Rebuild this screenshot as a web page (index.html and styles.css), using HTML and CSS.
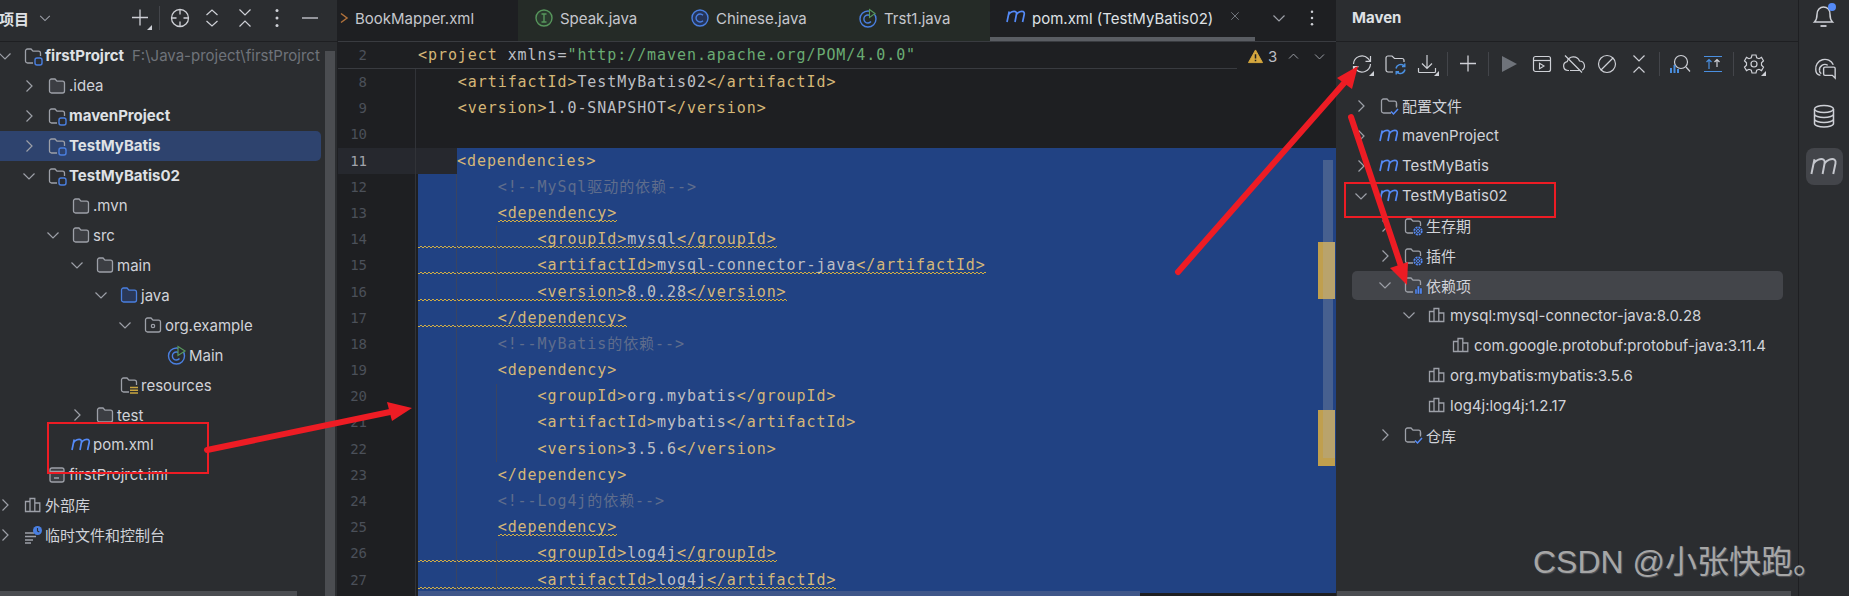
FILE: index.html
```html
<!DOCTYPE html>
<html lang="zh">
<head>
<meta charset="utf-8">
<title>Maven</title>
<link rel="stylesheet" href="styles.css">
</head>
<body>
<svg class="defs" width="0" height="0" aria-hidden="true">
  <defs>
    <symbol id="chev-r" viewBox="0 0 16 16"><path d="M5.5 2.5 11 8l-5.500 5.500" fill="none" stroke="#9da0a8" stroke-width="1.2"/></symbol>
    <symbol id="chev-d" viewBox="0 0 16 16"><path d="M2.500 5.500 8 11l5.500-5.500" fill="none" stroke="#9da0a8" stroke-width="1.2"/></symbol>
    <symbol id="folder" viewBox="0 0 20 20"><path d="M2.500 5a2 2 0 0 1 2-2h3.500l2 2.200h5.500a2 2 0 0 1 2 2V15a2 2 0 0 1-2 2h-11a2 2 0 0 1-2-2z" fill="#3c3e43" stroke="#9da0a8" stroke-width="1.3"/></symbol>
    <symbol id="folder-open" viewBox="0 0 20 20"><path d="M10 17H4.500a2 2 0 0 1-2-2V5a2 2 0 0 1 2-2h3.500l2 2.200h5.500a2 2 0 0 1 2 2V10" fill="none" stroke="#9da0a8" stroke-width="1.300"/></symbol>
    <symbol id="module" viewBox="0 0 20 20"><use href="#folder-open"/><rect x="12" y="12" width="7" height="7" rx="2" fill="none" stroke="#4a7fe0" stroke-width="1.400"/></symbol>
    <symbol id="folder-src" viewBox="0 0 20 20"><path d="M2.500 5a2 2 0 0 1 2-2h3.500l2 2.200h5.500a2 2 0 0 1 2 2V15a2 2 0 0 1-2 2h-11a2 2 0 0 1-2-2z" fill="#2a3857" stroke="#4a7fe0" stroke-width="1.300"/></symbol>
    <symbol id="folder-pkg" viewBox="0 0 20 20"><use href="#folder-open"/><path d="M10 17h5.500a2 2 0 0 0 2-2v-5" fill="none" stroke="#9da0a8" stroke-width="1.300"/><circle cx="10" cy="11" r="1.700" fill="none" stroke="#9da0a8" stroke-width="1.200"/></symbol>
    <symbol id="folder-res" viewBox="0 0 20 20"><use href="#folder-open"/><path d="M11 12.500h8M11 15.200h8M11 18h8" stroke="#c9a53f" stroke-width="1.500"/></symbol>
    <symbol id="main" viewBox="0 0 20 20"><circle cx="9.500" cy="11" r="8" fill="none" stroke="#4a7fe0" stroke-width="1.400"/><path d="M12.500 8.500a4 4 0 1 0 0 5" fill="none" stroke="#4a7fe0" stroke-width="1.400"/><path d="M11 1.500 18 6l-7 4.500z" fill="#2b2d30" stroke="#57965c" stroke-width="1.200"/></symbol>
    <symbol id="mvn" viewBox="0 0 20 20"><path d="M1 15 3.200 4.500M2.600 7.500C4 5 8 3.500 9.800 4.800c.9.700.8 1.700.6 2.700L9 15M10.400 7.500c1.400-2.500 5.400-4 7.200-2.700.9.700.8 1.700.6 2.700L16.600 15" fill="none" stroke="#548af7" stroke-width="1.700"/></symbol>
    <symbol id="mvn-w" viewBox="0 0 20 20"><path d="M1 15 3.200 4.500M2.600 7.500C4 5 8 3.500 9.800 4.800c.9.700.8 1.700.6 2.700L9 15M10.400 7.500c1.400-2.500 5.400-4 7.200-2.700.9.700.8 1.700.6 2.700L16.600 15" fill="none" stroke="#c5c7cd" stroke-width="1.400"/></symbol>
    <symbol id="iml" viewBox="0 0 20 20"><rect x="3" y="3" width="14" height="14" rx="2" fill="#3c3e43" stroke="#9da0a8" stroke-width="1.300"/><path d="M3 6.500h14M7 13h5" stroke="#9da0a8" stroke-width="1.300"/></symbol>
    <symbol id="lib" viewBox="0 0 20 20"><path d="M2.500 16.500V6.500h4.500v10zM7 16.500V3.500h4.800v13zM11.800 16.500V8h5v8.500z" fill="none" stroke="#9da0a8" stroke-width="1.300"/></symbol>
    <symbol id="scratch" viewBox="0 0 20 20"><path d="M2 8h9M2 11.500h11M2 15h8M2 18h6" stroke="#9da0a8" stroke-width="1.300"/><circle cx="14.500" cy="5.500" r="4.500" fill="#4a7fe0"/><path d="M14.500 3v3l1.800 1" fill="none" stroke="#2b2d30" stroke-width="1.100"/></symbol>
    <symbol id="f-check" viewBox="0 0 20 20"><use href="#folder-open"/><path d="M10 17h2M17.500 7.500v4" stroke="#9da0a8" stroke-width="1.300"/><path d="m12 15.500 2.500 2.500 4.500-5" fill="none" stroke="#548af7" stroke-width="1.500"/></symbol>
    <symbol id="f-gear" viewBox="0 0 20 20"><use href="#folder-open"/><circle cx="15" cy="15" r="3.700" fill="none" stroke="#548af7" stroke-width="1.800" stroke-dasharray="2 .9"/><circle cx="15" cy="15" r="1.500" fill="none" stroke="#548af7" stroke-width="1"/></symbol>
    <symbol id="f-dep" viewBox="0 0 20 20"><use href="#folder-open"/><path d="M12 19v-5h2.200v5zM14.200 19v-8h2.400v8zM16.600 19v-6h2.400v6z" fill="#548af7" stroke="#2b2d30" stroke-width=".4"/></symbol>
    <symbol id="i-tab" viewBox="0 0 20 20"><circle cx="10" cy="10" r="8" fill="#2a3a2e" stroke="#57965c" stroke-width="1.400"/><path d="M7.500 6h5M7.500 14h5M10 6v8" stroke="#57965c" stroke-width="1.400"/></symbol>
    <symbol id="c-tab" viewBox="0 0 20 20"><circle cx="10" cy="10" r="8" fill="#253457" stroke="#4a7fe0" stroke-width="1.400"/><path d="M13 7.300a4 4 0 1 0 0 5.400" fill="none" stroke="#4a7fe0" stroke-width="1.400"/></symbol>
    <symbol id="t-tab" viewBox="0 0 20 20"><circle cx="10" cy="11" r="8" fill="none" stroke="#4a7fe0" stroke-width="1.400"/><path d="M13 8.500a4 4 0 1 0 0 5" fill="none" stroke="#4a7fe0" stroke-width="1.400"/><path d="M11.500 1.500 17 5.500l-5.500 4z" fill="#252b27" stroke="#57965c" stroke-width="1.100"/></symbol>
    <symbol id="xml-tab" viewBox="0 0 10 20"><path d="M1 5.500 7 10l-6 4.500" fill="none" stroke="#b0713b" stroke-width="1.500"/></symbol>
    <symbol id="close" viewBox="0 0 12 12"><path d="m1.500 1.500 9 9M10.500 1.500l-9 9" stroke="#6f737a" stroke-width="1.200"/></symbol>
    <symbol id="corner" viewBox="0 0 24 24"><path d="M24 19v5h-5z" fill="#ced0d6"/></symbol>
    <symbol id="t-plus" viewBox="0 0 24 24"><path d="M12 3.500v16M4 11.500h16" stroke="#ced0d6" stroke-width="1.300"/></symbol>
    <symbol id="t-target" viewBox="0 0 24 24"><circle cx="12" cy="12" r="8.500" fill="none" stroke="#ced0d6" stroke-width="1.300"/><path d="M12 3.500v5M12 15.500v5M3.500 12h5M15.500 12h5" stroke="#ced0d6" stroke-width="1.300"/></symbol>
    <symbol id="t-expand" viewBox="0 0 24 24"><path d="m6.500 9 5.500-5 5.500 5M6.500 15l5.500 5 5.500-5" fill="none" stroke="#ced0d6" stroke-width="1.200"/></symbol>
    <symbol id="t-collapse" viewBox="0 0 24 24"><path d="m6.500 3.500 5.500 5.500 5.500-5.500M6.500 20.500l5.500-5.500 5.500 5.500" fill="none" stroke="#ced0d6" stroke-width="1.200"/></symbol>
    <symbol id="t-dots" viewBox="0 0 24 24"><circle cx="12" cy="4.500" r="1.500" fill="#ced0d6"/><circle cx="12" cy="12" r="1.500" fill="#ced0d6"/><circle cx="12" cy="19.500" r="1.500" fill="#ced0d6"/></symbol>
    <symbol id="t-min" viewBox="0 0 24 24"><path d="M4 12h16" stroke="#ced0d6" stroke-width="1.300"/></symbol>
    <symbol id="t-refresh" viewBox="0 0 24 24"><path d="M3.500 12A8.500 8.500 0 0 1 18 6.500l2 2.500M20.500 12A8.500 8.500 0 0 1 6 17.500L4 15" fill="none" stroke="#ced0d6" stroke-width="1.200"/><path d="M20.500 4v5.300h-5M3.500 20v-5.300h5" fill="none" stroke="#ced0d6" stroke-width="1.200"/></symbol>
    <symbol id="t-fsync" viewBox="0 0 24 24"><path d="M10 20H5a2 2 0 0 1-2-2V6a2 2 0 0 1 2-2h4l2.500 2.500H19a2 2 0 0 1 2 2V10" fill="none" stroke="#ced0d6" stroke-width="1.200"/><path d="M13 16.500a5 5 0 0 1 8.500-2.500M22 17.500a5 5 0 0 1-8.500 2.500M21.800 11.500V14.500H19M13.200 22.500V19.800H16" fill="none" stroke="#4a8fe0" stroke-width="1.400"/></symbol>
    <symbol id="t-down" viewBox="0 0 24 24"><path d="M12 3v13M7 11.500l5 5 5-5M3.500 16v3.500a1 1 0 0 0 1 1h15a1 1 0 0 0 1-1V16" fill="none" stroke="#ced0d6" stroke-width="1.200"/></symbol>
    <symbol id="t-run" viewBox="0 0 24 24"><path d="M5 4v16l15-8z" fill="#6f737a"/></symbol>
    <symbol id="t-conf" viewBox="0 0 24 24"><rect x="3.500" y="4.500" width="17" height="15" rx="2" fill="none" stroke="#ced0d6" stroke-width="1.200"/><path d="M3.500 8.500h17" stroke="#ced0d6" stroke-width="1.200"/><path d="m9.500 11.200 4.500 2.800-4.500 2.800z" fill="none" stroke="#ced0d6" stroke-width="1.100"/></symbol>
    <symbol id="t-cloud" viewBox="0 0 24 24"><path d="M7 18.500H6a4.500 4.500 0 0 1-.8-8.900 6.500 6.500 0 0 1 12.300-.6 5 5 0 0 1 2.500 9.300" fill="none" stroke="#ced0d6" stroke-width="1.200"/><path d="M8 18.500h10M3 3.500l17 17" fill="none" stroke="#ced0d6" stroke-width="1.200"/></symbol>
    <symbol id="t-ban" viewBox="0 0 24 24"><circle cx="12" cy="12" r="8.500" fill="none" stroke="#ced0d6" stroke-width="1.200"/><path d="M6 18 18 6" stroke="#ced0d6" stroke-width="1.200"/></symbol>
    <symbol id="t-search" viewBox="0 0 24 24"><circle cx="13" cy="10" r="6.500" fill="none" stroke="#ced0d6" stroke-width="1.200"/><path d="m18 15 4 4.500" stroke="#ced0d6" stroke-width="1.200"/><path d="M3 16v5M6.500 13v8M10 17v4" stroke="#4a8fe0" stroke-width="2"/></symbol>
    <symbol id="t-up" viewBox="0 0 24 24"><path d="M3 4.500h18M3 19.500h18" stroke="#4a8fe0" stroke-width="1.200"/><path d="M8 17V7.500M5.500 10l2.500-2.500 2.500 2.500" fill="none" stroke="#4a8fe0" stroke-width="1.200"/><path d="M16 15V7.500M13.500 10l2.500-2.500 2.500 2.500" fill="none" stroke="#ced0d6" stroke-width="1.200"/></symbol>
    <symbol id="t-gear" viewBox="0 0 24 24"><path d="M10 3h4l.7 2.700 2.300 1 2.500-1.300 2 3.400-2 1.900v2.600l2 1.900-2 3.400-2.500-1.300-2.300 1L14 21h-4l-.7-2.700-2.300-1-2.500 1.300-2-3.400 2-1.900v-2.600l-2-1.900 2-3.400L7 6.700l2.300-1z" fill="none" stroke="#ced0d6" stroke-width="1.200"/><circle cx="12" cy="12" r="3" fill="none" stroke="#ced0d6" stroke-width="1.200"/></symbol>
    <symbol id="s-bell" viewBox="0 0 26 28"><path d="M2.500 20c2-2 2.500-4 2.500-7.500C5 8 8 5 11.500 5S18 7.500 18 12.500c0 3.500.5 5.500 2.500 7.500z" fill="none" stroke="#ced0d6" stroke-width="1.500"/><path d="M8.500 24h6" stroke="#ced0d6" stroke-width="1.800"/><circle cx="20" cy="5" r="4" fill="#548af7"/></symbol>
    <symbol id="s-ai" viewBox="0 0 26 26"><path d="M3 15A10 10 0 0 1 22 9.500" fill="none" stroke="#ced0d6" stroke-width="1.500"/><path d="M7 16a6 6 0 0 1 9-6" fill="none" stroke="#ced0d6" stroke-width="1.500"/><path d="M3 15c0 3 2 5.500 5 6M7 16c0 1.500 1 2.500 2 3" fill="none" stroke="#ced0d6" stroke-width="1.500"/><path d="M13 12h9.500a1.500 1.500 0 0 1 1.500 1.500V24l-3-3h-8a1.500 1.500 0 0 1-1.500-1.500v-6A1.500 1.500 0 0 1 13 12z" fill="#2b2d30" stroke="#ced0d6" stroke-width="1.500"/></symbol>
    <symbol id="s-db" viewBox="0 0 24 24"><ellipse cx="12" cy="5" ry="3.500" rx="9.500" fill="none" stroke="#ced0d6" stroke-width="1.500"/><path d="M2.500 5v14.500C2.500 21.500 7 23 12 23s9.500-1.500 9.500-3.500V5M2.500 10c0 2 4.500 3.500 9.500 3.500s9.500-1.500 9.500-3.500M2.500 15c0 2 4.500 3.500 9.500 3.500s9.500-1.500 9.500-3.500" fill="none" stroke="#ced0d6" stroke-width="1.500"/></symbol>
  </defs>
</svg>

<div class="app">
  <aside class="project">
    <header class="head">
      <span class="project-title">项目</span>
      <svg class="head-chev"><use href="#chev-d"/></svg>
      <span class="spacer"></span>
      <span class="tb"><svg class="tb-ic"><use href="#t-plus"/><use href="#corner"/></svg></span>
      <i class="sep"></i>
      <span class="tb"><svg class="tb-ic"><use href="#t-target"/></svg></span>
      <span class="tb"><svg class="tb-ic"><use href="#t-expand"/></svg></span>
      <span class="tb"><svg class="tb-ic"><use href="#t-collapse"/></svg></span>
      <span class="tb"><svg class="tb-ic"><use href="#t-dots"/></svg></span>
      <span class="tb"><svg class="tb-ic"><use href="#t-min"/></svg></span>
    </header>
    <div class="tree tree-left">
      <div class="row d0"><svg class="chev"><use href="#chev-d"/></svg><svg class="ic"><use href="#module"/></svg><b>firstProjrct</b><em>F:\Java-project\firstProjrct</em></div>
      <div class="row d1"><svg class="chev"><use href="#chev-r"/></svg><svg class="ic"><use href="#folder"/></svg><span>.idea</span></div>
      <div class="row d1"><svg class="chev"><use href="#chev-r"/></svg><svg class="ic"><use href="#module"/></svg><b>mavenProject</b></div>
      <div class="row d1 active"><svg class="chev"><use href="#chev-r"/></svg><svg class="ic"><use href="#module"/></svg><b>TestMyBatis</b></div>
      <div class="row d1"><svg class="chev"><use href="#chev-d"/></svg><svg class="ic"><use href="#module"/></svg><b>TestMyBatis02</b></div>
      <div class="row d2"><i class="chev"></i><svg class="ic"><use href="#folder"/></svg><span>.mvn</span></div>
      <div class="row d2"><svg class="chev"><use href="#chev-d"/></svg><svg class="ic"><use href="#folder"/></svg><span>src</span></div>
      <div class="row d3"><svg class="chev"><use href="#chev-d"/></svg><svg class="ic"><use href="#folder"/></svg><span>main</span></div>
      <div class="row d4"><svg class="chev"><use href="#chev-d"/></svg><svg class="ic"><use href="#folder-src"/></svg><span>java</span></div>
      <div class="row d5"><svg class="chev"><use href="#chev-d"/></svg><svg class="ic"><use href="#folder-pkg"/></svg><span>org.example</span></div>
      <div class="row d6"><i class="chev"></i><svg class="ic"><use href="#main"/></svg><span>Main</span></div>
      <div class="row d4"><i class="chev"></i><svg class="ic"><use href="#folder-res"/></svg><span>resources</span></div>
      <div class="row d3"><svg class="chev"><use href="#chev-r"/></svg><svg class="ic"><use href="#folder"/></svg><span>test</span></div>
      <div class="row d2"><i class="chev"></i><svg class="ic"><use href="#mvn"/></svg><span>pom.xml</span></div>
      <div class="row d1"><i class="chev"></i><svg class="ic"><use href="#iml"/></svg><span>firstProjrct.iml</span></div>
      <div class="row d0"><svg class="chev"><use href="#chev-r"/></svg><svg class="ic"><use href="#lib"/></svg><span>外部库</span></div>
      <div class="row d0"><svg class="chev"><use href="#chev-r"/></svg><svg class="ic"><use href="#scratch"/></svg><span>临时文件和控制台</span></div>
    </div>
    <div class="vbar"></div>
    <div class="hbar hbar-left"></div>
  </aside>

  <main class="editor">
    <nav class="tabs">
      <div class="tab tab-first"><svg class="tab-xml"><use href="#xml-tab"/></svg><span>BookMapper.xml</span></div>
      <div class="tab java"><svg class="tab-ic"><use href="#i-tab"/></svg><span>Speak.java</span></div>
      <div class="tab java"><svg class="tab-ic"><use href="#c-tab"/></svg><span>Chinese.java</span></div>
      <div class="tab java"><svg class="tab-ic"><use href="#t-tab"/></svg><span>Trst1.java</span></div>
      <div class="tab current"><svg class="tab-ic tab-m"><use href="#mvn"/></svg><span>pom.xml (TestMyBatis02)</span><svg class="tab-x"><use href="#close"/></svg></div>
      <svg class="tab-more"><use href="#chev-d"/></svg>
      <svg class="tab-dots"><use href="#t-dots"/></svg>
    </nav>
    <div class="code">
      <div class="line sticky"><span class="num">2</span><pre class="txt">&lt;project <span class="p">xmlns=</span><span class="s">"http://maven.apache.org/POM/4.0.0"</span></pre></div>
      <div class="line"><span class="num">8</span><pre class="txt">    &lt;artifactId&gt;<span class="p">TestMyBatis02</span>&lt;/artifactId&gt;</pre></div>
      <div class="line"><span class="num">9</span><pre class="txt">    &lt;version&gt;<span class="p">1.0-SNAPSHOT</span>&lt;/version&gt;</pre></div>
      <div class="line"><span class="num">10</span><pre class="txt"></pre></div>
      <div class="line caret"><span class="num">11</span><div class="caret-sel"><pre class="txt sel">&lt;dependencies&gt;</pre></div></div>
      <div class="line"><span class="num">12</span><pre class="txt sel"><span class="c">        &lt;!--MySql驱动的依赖--&gt;</span></pre></div>
      <div class="line"><span class="num">13</span><pre class="txt sel">        <u>&lt;dependency&gt;</u></pre></div>
      <div class="line"><span class="num">14</span><pre class="txt sel"><u>            &lt;groupId&gt;<span class="p">mysql</span>&lt;/groupId&gt;</u></pre></div>
      <div class="line"><span class="num">15</span><pre class="txt sel"><u>            &lt;artifactId&gt;<span class="p">mysql-connector-java</span>&lt;/artifactId&gt;</u></pre></div>
      <div class="line"><span class="num">16</span><pre class="txt sel"><u>            &lt;version&gt;<span class="p">8.0.28</span>&lt;/version&gt;</u></pre></div>
      <div class="line"><span class="num">17</span><pre class="txt sel"><u>        &lt;/dependency&gt;</u></pre></div>
      <div class="line"><span class="num">18</span><pre class="txt sel"><span class="c">        &lt;!--MyBatis的依赖--&gt;</span></pre></div>
      <div class="line"><span class="num">19</span><pre class="txt sel">        &lt;dependency&gt;</pre></div>
      <div class="line"><span class="num">20</span><pre class="txt sel">            &lt;groupId&gt;<span class="p">org.mybatis</span>&lt;/groupId&gt;</pre></div>
      <div class="line"><span class="num">21</span><pre class="txt sel">            &lt;artifactId&gt;<span class="p">mybatis</span>&lt;/artifactId&gt;</pre></div>
      <div class="line"><span class="num">22</span><pre class="txt sel">            &lt;version&gt;<span class="p">3.5.6</span>&lt;/version&gt;</pre></div>
      <div class="line"><span class="num">23</span><pre class="txt sel">        &lt;/dependency&gt;</pre></div>
      <div class="line"><span class="num">24</span><pre class="txt sel"><span class="c">        &lt;!--Log4j的依赖--&gt;</span></pre></div>
      <div class="line"><span class="num">25</span><pre class="txt sel">        <u>&lt;dependency&gt;</u></pre></div>
      <div class="line"><span class="num">26</span><pre class="txt sel"><u>            &lt;groupId&gt;<span class="p">log4j</span>&lt;/groupId&gt;</u></pre></div>
      <div class="line"><span class="num">27</span><pre class="txt sel"><u>            &lt;artifactId&gt;<span class="p">log4j</span>&lt;/artifactId&gt;</u></pre></div>
    </div>
    <i class="gutter-line"></i>
    <i class="guide g-outer"></i>
    <i class="guide g-a"></i>
    <i class="guide g-b"></i>
    <i class="guide g-c"></i>
    <div class="inspect">
      <svg class="warn" viewBox="0 0 16 16"><path d="M8 1 15.500 14.500H.5z" fill="#d5a73e" stroke="#d5a73e" stroke-linejoin="round"/><path d="M8 5.500v4.500M8 11.500v1.500" stroke="#1e1f22" stroke-width="1.600"/></svg>
      <span>3</span>
      <svg class="ins-chev up"><use href="#chev-d"/></svg>
      <svg class="ins-chev"><use href="#chev-d"/></svg>
    </div>
    <i class="mark thumb"></i>
    <i class="mark gold g1"></i>
    <i class="mark gold g2"></i>
    <i class="mark gold g3"></i>
    <div class="hbar hbar-editor"></div>
  </main>

  <section class="maven">
    <header class="head head-m"><strong>Maven</strong></header>
    <div class="toolbar">
      <span class="tb"><svg class="tb-ic"><use href="#t-refresh"/><use href="#corner"/></svg></span>
      <span class="tb"><svg class="tb-ic"><use href="#t-fsync"/></svg></span>
      <span class="tb"><svg class="tb-ic"><use href="#t-down"/><use href="#corner"/></svg></span>
      <i class="sep"></i>
      <span class="tb"><svg class="tb-ic"><use href="#t-plus"/></svg></span>
      <i class="sep"></i>
      <span class="tb"><svg class="tb-ic"><use href="#t-run"/></svg></span>
      <span class="tb"><svg class="tb-ic"><use href="#t-conf"/></svg></span>
      <span class="tb"><svg class="tb-ic"><use href="#t-cloud"/></svg></span>
      <span class="tb"><svg class="tb-ic"><use href="#t-ban"/></svg></span>
      <span class="tb"><svg class="tb-ic"><use href="#t-collapse"/></svg></span>
      <i class="sep"></i>
      <span class="tb"><svg class="tb-ic"><use href="#t-search"/></svg></span>
      <span class="tb"><svg class="tb-ic"><use href="#t-up"/></svg></span>
      <i class="sep"></i>
      <span class="tb"><svg class="tb-ic"><use href="#t-gear"/><use href="#corner"/></svg></span>
    </div>
    <div class="tree tree-m">
      <div class="row d0"><svg class="chev"><use href="#chev-r"/></svg><svg class="ic"><use href="#f-check"/></svg><span>配置文件</span></div>
      <div class="row d0"><svg class="chev"><use href="#chev-r"/></svg><svg class="ic"><use href="#mvn"/></svg><span>mavenProject</span></div>
      <div class="row d0"><svg class="chev"><use href="#chev-r"/></svg><svg class="ic"><use href="#mvn"/></svg><span>TestMyBatis</span></div>
      <div class="row d0"><svg class="chev"><use href="#chev-d"/></svg><svg class="ic"><use href="#mvn"/></svg><span>TestMyBatis02</span></div>
      <div class="row d1"><svg class="chev"><use href="#chev-r"/></svg><svg class="ic"><use href="#f-gear"/></svg><span>生存期</span></div>
      <div class="row d1"><svg class="chev"><use href="#chev-r"/></svg><svg class="ic"><use href="#f-gear"/></svg><span>插件</span></div>
      <div class="row d1 hover"><svg class="chev"><use href="#chev-d"/></svg><svg class="ic"><use href="#f-dep"/></svg><span>依赖项</span></div>
      <div class="row d2"><svg class="chev"><use href="#chev-d"/></svg><svg class="ic"><use href="#lib"/></svg><span>mysql:mysql-connector-java:8.0.28</span></div>
      <div class="row d3"><i class="chev"></i><svg class="ic"><use href="#lib"/></svg><span>com.google.protobuf:protobuf-java:3.11.4</span></div>
      <div class="row d2"><i class="chev"></i><svg class="ic"><use href="#lib"/></svg><span>org.mybatis:mybatis:3.5.6</span></div>
      <div class="row d2"><i class="chev"></i><svg class="ic"><use href="#lib"/></svg><span>log4j:log4j:1.2.17</span></div>
      <div class="row d1"><svg class="chev"><use href="#chev-r"/></svg><svg class="ic"><use href="#f-check"/></svg><span>仓库</span></div>
    </div>
    <div class="hbar hbar-m"></div>
  </section>

  <aside class="stripe">
    <svg class="st st-bell"><use href="#s-bell"/></svg>
    <svg class="st st-ai"><use href="#s-ai"/></svg>
    <svg class="st st-db"><use href="#s-db"/></svg>
    <span class="st-active"><svg class="st-m"><use href="#mvn-w"/></svg></span>
  </aside>
</div>

<svg class="notes" viewBox="0 0 1849 596" aria-hidden="true">
  <rect class="box" x="48" y="423" width="160" height="50"/>
  <rect class="box" x="1345" y="183" width="210" height="34"/>
  <path class="shaft" d="M207 450 390 412"/>
  <path class="head-a" d="M412 408 387 402 392 421z"/>
  <path class="shaft" d="M1178 272 1345 82"/>
  <path class="head-a" d="M1358 66 1337 78 1352 89z"/>
  <path class="shaft" d="M1351 117 1403 272"/>
  <path class="head-a" d="M1407 285 1390 268 1408 262z"/>
</svg>
<div class="watermark">CSDN @小张快跑。</div>
</body>
</html>
```
FILE: styles.css
```css
* { box-sizing: border-box; }
html, body { margin: 0; padding: 0; height: 596px; overflow: hidden; background: #1e1f22; }
body { position: relative; font-family: Inter, "Noto Sans CJK SC", sans-serif; font-size: 15px; color: #d1d3d9; }
.defs { position: absolute; }
.app { display: flex; height: 596px; }

.project { position: relative; width: 338px; flex: none; background: #2b2d30; overflow: hidden; border-right: 1px solid #1e1f22; }
.maven { position: relative; width: 462px; flex: none; background: #2b2d30; overflow: hidden; }
.editor { position: relative; width: 998px; flex: none; background: #1e1f22; overflow: hidden; }
.stripe { width: 51px; flex: none; background: #2b2d30; border-left: 1px solid #1e1f22; display: flex; flex-direction: column; align-items: center; }

.head { height: 42px; display: flex; align-items: center; border-bottom: 1px solid #1e1f22; padding: 0 11px 5px 0; }
.project-title { font-weight: 600; margin-left: -1px; font-size: 15px; color: #dfe1e5; }
.head-chev { width: 14px; height: 14px; margin-left: 9px; }
.spacer { flex: 1; }
.tb { width: 32.5px; height: 30px; display: flex; align-items: center; justify-content: center; flex: none; }
.tb-ic { width: 24px; height: 24px; overflow: visible; }
.sep { width: 1px; height: 24px; margin: 0 3.25px; background: #43454a; flex: none; }
.head-m { padding-left: 16px; padding-bottom: 6px; }
.head-m strong { font-size: 15px; font-weight: 700; color: #dfe1e5; }
.toolbar { display: flex; align-items: center; height: 44px; padding-left: 10px; margin-bottom: 5px; }
.toolbar .sep { margin: 0 3.75px; }

.tree { display: flex; flex-direction: column; }
.tree-left { margin: -1px 0 0 -3px; }
.tree-m { padding-left: 16px; padding-right: 15px; }
.tree-m .row { padding-left: 1px; white-space: nowrap; }
.tree-m .ic { margin-right: 3px; }
.row { height: 29.93px; display: flex; align-items: center; flex: none; white-space: nowrap; }
.row b { font-weight: 700; color: #dfe1e5; }
.row em { font-style: normal; color: #6f737a; margin-left: 8px; }
.chev { width: 16px; height: 16px; margin-right: 10px; flex: none; display: block; }
.ic { width: 20px; height: 20px; margin-right: 2px; flex: none; overflow: visible; }
.d1 { margin-left: 24px; }
.d2 { margin-left: 48px; }
.d3 { margin-left: 72px; }
.d4 { margin-left: 96px; }
.d5 { margin-left: 120px; }
.d6 { margin-left: 144px; }
.row.active { margin-left: 0; padding-left: 24px; width: 324px; background: #2e436e; border-radius: 0 5px 5px 0; }
.row.hover { margin-left: 0; padding-left: 25px; background: #43454a; border-radius: 5px; }

.vbar { position: absolute; left: 325px; top: 51px; bottom: 0; width: 10px; background: #4b4d51; }
.hbar { position: absolute; bottom: 0; height: 5px; background: #4b4d51; }
.hbar-left { left: 0; width: 297px; }
.hbar-editor { left: 80px; width: 722px; background: #3f5689; }
.hbar-m { left: 1px; width: 454px; }

.tabs { display: flex; align-items: center; height: 42px; border-bottom: 1px solid #393b40; font-size: 15px; color: #c5c7cd; }
.tab { height: 41px; display: flex; align-items: center; padding: 0 39px 5px 16px; flex: none; }
.tab-first { padding-left: 2px; width: 180px; }
.tab-xml { width: 10px; height: 20px; margin-right: 5px; flex: none; }
.tab-ic { width: 20px; height: 20px; margin-right: 6px; flex: none; }
.tab-m { margin-top: -4px; }
.java { background: #252b27; }
.java:nth-child(2) { width: 156px; }
.java:nth-child(3) { width: 168px; }
.java:nth-child(4) { width: 148px; }
.current { width: 265px; padding: 0 0 0 16px; border-bottom: 4px solid #5a5d63; color: #dfe1e5; position: relative; }
.tab-x { position: absolute; left: 240px; top: 11px; width: 10px; height: 10px; }
.tab-more { width: 16px; height: 16px; margin-left: 16px; margin-top: -6px; }
.tab-dots { width: 20px; height: 20px; margin-left: 15px; margin-top: -6px; }

.code { font-family: "DejaVu Sans Mono", "Noto Sans CJK SC", monospace; font-size: 15px; letter-spacing: .93px; color: #d5b778; }
.line { display: flex; height: 26.2px; line-height: 26px; }
.sticky { height: 27px; border-bottom: 1px solid #393b40; }
.num { width: 29px; flex: none; text-align: right; font-size: 14px; letter-spacing: 0; color: #4b5059; margin-right: 51px; }
.txt { margin: 0; font: inherit; white-space: pre; flex: 1; min-width: 0; }
.sel { background: #214283; }
.caret { background: #26282e; }
.caret .num { color: #a1a3ab; }
.caret-sel { flex: 1; padding-left: 39px; display: flex; }
.p { color: #bcbec4; }
.s { color: #6aab73; }
.c { color: #5f6d8c; }
u {
  text-decoration: none;
  background-image:
    linear-gradient(135deg, transparent 35%, #d0ad45 35% 65%, transparent 65%),
    linear-gradient(45deg, transparent 35%, #d0ad45 35% 65%, transparent 65%);
  background-size: 4px 2px;
  background-position: 0 100%, 2px 100%;
  background-repeat: repeat-x;
}

.gutter-line { position: absolute; left: 77px; top: 69px; bottom: 0; width: 1px; background: #313338; }
.guide { position: absolute; width: 1px; background: #3a4562; }
.g-outer { left: 118px; top: 174px; bottom: 0; }
.g-a { left: 158px; top: 226px; height: 78px; }
.g-b { left: 158px; top: 384px; height: 78px; }
.g-c { left: 158px; top: 541px; bottom: 0; }

.inspect { position: absolute; left: 899px; top: 42px; width: 99px; height: 28px; display: flex; align-items: center; padding-left: 11px; background: #1e1f22; color: #bcbec4; }
.warn { width: 15px; height: 15px; margin-right: 5px; flex: none; }
.ins-chev { width: 13px; height: 13px; margin-left: 13px; flex: none; }
.up { transform: rotate(180deg); margin-left: 10px; }
.mark { position: absolute; }
.thumb { left: 985px; top: 160px; width: 10px; height: 298px; background: #47608f; }
.gold { right: 1px; width: 17px; background: #b9a36c; border-left: 5px solid #c09f4e; }
.g1 { top: 242px; height: 57px; }
.g2 { top: 410px; height: 48px; }
.g3 { top: 458px; height: 8px; background: #c09f4e; }

.st { display: block; flex: none; }
.st-bell { width: 26px; height: 28px; margin-top: 2px; margin-left: 2px; }
.st-ai { width: 24px; height: 24px; margin-top: 26px; margin-left: 2px; }
.st-db { width: 24px; height: 24px; margin-top: 24px; }
.st-active { width: 37px; height: 37px; margin-top: 20px; border-radius: 8px; background: #43454a; display: flex; align-items: center; justify-content: center; }
.st-m { width: 28px; height: 28px; }

.notes { position: absolute; left: 0; top: 0; width: 1849px; height: 596px; pointer-events: none; }
.box { fill: none; stroke: #ed1c24; stroke-width: 2; }
.shaft { fill: none; stroke: #ed1c24; stroke-width: 6; stroke-linecap: round; }
.head-a { fill: #ed1c24; }
.watermark { position: absolute; left: 1533px; top: 540px; font-family: "Liberation Sans", "Noto Sans CJK SC", sans-serif; font-size: 32px; line-height: 44px; color: #a6a6a6; white-space: nowrap; text-shadow: 1px 1px 1px #55565a; }
```
